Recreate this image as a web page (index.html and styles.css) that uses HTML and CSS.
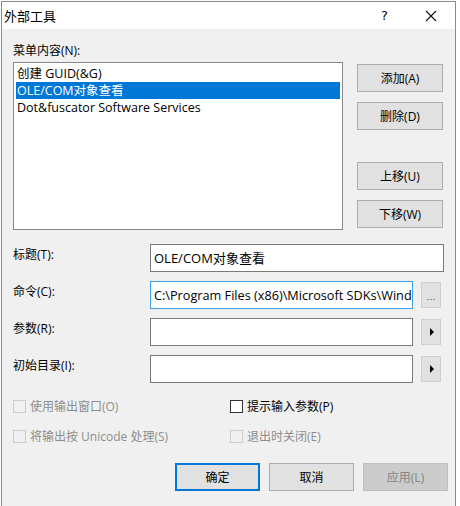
FILE: index.html
```html
<!DOCTYPE html>
<html lang="zh-CN">
<head>
    <meta charset="UTF-8">
    <title>外部工具</title>
    <link rel="stylesheet" href="styles.css">
</head>
<body>
    <div class="window">
        <div class="titlebar">
            <span class="title">外部工具</span>
            <span class="help">?</span>
            <span class="close">
                <svg width="12" height="12" viewBox="0 0 12 12"><path d="M1 1L11 11M11 1L1 11" stroke="#111" stroke-width="1.1"/></svg>
            </span>
        </div>

        <div class="content">
            <div class="top">
                <div class="list-col">
                    <div class="label">菜单内容(N):</div>
                    <div class="listbox">
                        <div class="item">创建 GUID(&amp;G)</div>
                        <div class="item selected">OLE/COM对象查看</div>
                        <div class="item">Dot&amp;fuscator Software Services</div>
                    </div>
                </div>
                <div class="side-buttons">
                    <button class="btn">添加(A)</button>
                    <button class="btn">删除(D)</button>
                    <button class="btn spaced">上移(U)</button>
                    <button class="btn">下移(W)</button>
                </div>
            </div>

            <div class="fields">
                <div class="field">
                    <span class="field-label">标题(T):</span>
                    <div class="input wide">OLE/COM对象查看</div>
                </div>
                <div class="field">
                    <span class="field-label">命令(C):</span>
                    <div class="input focused">C:\Program Files (x86)\Microsoft SDKs\Wind</div>
                    <button class="mini dots">…</button>
                </div>
                <div class="field">
                    <span class="field-label">参数(R):</span>
                    <div class="input"></div>
                    <button class="mini"><span class="arrow"></span></button>
                </div>
                <div class="field">
                    <span class="field-label">初始目录(I):</span>
                    <div class="input"></div>
                    <button class="mini"><span class="arrow"></span></button>
                </div>
            </div>

            <div class="checks">
                <label class="check disabled"><span class="box"></span>使用输出窗口(O)</label>
                <label class="check"><span class="box"></span>提示输入参数(P)</label>
                <label class="check disabled"><span class="box"></span>将输出按 Unicode 处理(S)</label>
                <label class="check disabled"><span class="box"></span>退出时关闭(E)</label>
            </div>

            <div class="footer">
                <button class="btn default">确定</button>
                <button class="btn">取消</button>
                <button class="btn" disabled>应用(L)</button>
            </div>
        </div>
    </div>
</body>
</html>
```

FILE: styles.css
```css
body {
    margin: 0;
    background-color: #ffffff;
    font-family: 'Open Sans', 'Noto Sans CJK SC', sans-serif;
    font-size: 12px;
    color: #000;
}
.window {
    margin: 1px 0 0 1px;
    width: 453px;
    height: 505px;
    border: 1px solid #8a8a8a;
    border-bottom: none;
    background-color: #f0f0f0;
    overflow: hidden;
}
.titlebar {
    height: 27px;
    background-color: #fff;
    display: flex;
    align-items: center;
}
.title {
    padding-left: 2px;
    font-size: 13px;
    flex: 1;
}
.help {
    width: 14px;
    font-family: 'DejaVu Sans', sans-serif;
    font-size: 13px;
    margin-right: 30px;
}
.close {
    width: 22px;
    display: flex;
    margin-right: 8px;
}
.content {
    padding: 14px 0 0 11px;
}
.top {
    display: flex;
}
.label {
    height: 19px;
    line-height: 16px;
}
.listbox {
    width: 328px;
    height: 164px;
    border: 1px solid #828790;
    background-color: #fff;
    padding-top: 2px;
    box-sizing: content-box;
}
.item {
    height: 17px;
    line-height: 17px;
    padding-left: 1px;
    margin: 0 2px;
    white-space: nowrap;
    font-size: 12.5px;
}
.item.selected {
    background-color: #0078d7;
    color: #fff;
}
.side-buttons {
    display: flex;
    flex-direction: column;
    gap: 10px;
    margin: 21px 0 0 14px;
}
.btn {
    width: 86px;
    height: 28px;
    background-color: #e1e1e1;
    border: 1px solid #adadad;
    font-family: inherit;
    font-size: 12px;
    color: #000;
    padding: 0;
}
.btn.spaced {
    margin-top: 22px;
}
.btn.default {
    border: 2px solid #0078d7;
}
.btn:disabled {
    background-color: #cccccc;
    border-color: #bfbfbf;
    color: #838383;
}
.fields {
    margin-top: 14px;
    display: flex;
    flex-direction: column;
    gap: 9px;
}
.field {
    display: flex;
    align-items: center;
    height: 28px;
}
.field-label {
    width: 137px;
    margin-top: -8px;
}
.input {
    width: 258px;
    height: 26px;
    border: 1px solid #7a7a7a;
    background-color: #fff;
    line-height: 26px;
    padding-left: 3px;
    box-sizing: content-box;
    white-space: nowrap;
    overflow: hidden;
    font-size: 13px;
}
.input.wide {
    width: 289px;
}
.input.focused {
    border-color: #3d9ee6;
    font-size: 12.7px;
}
.mini {
    width: 20px;
    height: 26px;
    margin-left: 8px;
    background-color: #e1e1e1;
    border: 1px solid #cfcfcf;
    padding: 0;
    font-family: 'DejaVu Sans', sans-serif;
    display: flex;
    align-items: center;
    justify-content: center;
}
.mini.dots {
    font-size: 9px;
    line-height: 1;
    padding-top: 4px;
    color: #333;
}
.arrow {
    width: 0;
    height: 0;
    border-top: 4px solid transparent;
    border-bottom: 4px solid transparent;
    border-left: 4px solid #000;
    margin-left: 2px;
}
.checks {
    margin-top: 15px;
    display: grid;
    grid-template-columns: 217px auto;
    row-gap: 14px;
}
.check {
    display: flex;
    align-items: center;
    height: 16px;
}
.box {
    width: 11px;
    height: 11px;
    border: 1px solid #333;
    background-color: #fff;
    margin-right: 4px;
}
.check.disabled {
    color: #8d8d8d;
}
.check.disabled .box {
    border-color: #cccccc;
    background-color: #f0f0f0;
}
.footer {
    display: flex;
    gap: 9px;
    margin: 19px 0 0 162px;
}
.footer .btn {
    width: 85px;
}
```
